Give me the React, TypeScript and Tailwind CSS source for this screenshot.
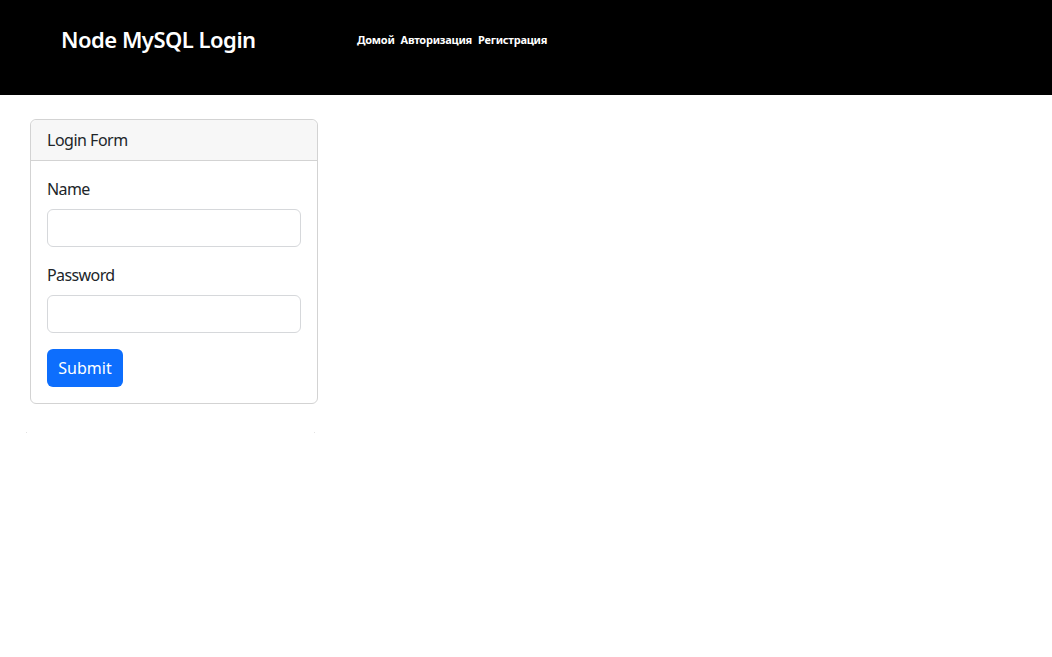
const App = () => {
  const font = { fontFamily: '"Noto Sans", "Open Sans", sans-serif' };

  return (
    <div className="min-h-[657px] bg-white text-[#212529]" style={font}>
      {/* шапка */}
      <header className="flex h-[95px] items-start bg-black pt-[23px] text-white">
        <h1 className="ml-[61px] w-[296px] text-[22px] leading-[32px] font-semibold tracking-[-0.5px]">
          Node MySQL Login
        </h1>
        <nav className="flex gap-[6px] pt-[9px] text-[11px] leading-[16px] font-bold tracking-[-0.25px]">
          <a href="#">Домой</a>
          <a href="#">Авторизация</a>
          <a href="#">Регистрация</a>
        </nav>
      </header>

      <div className="ml-[30px] mt-[24px] w-[288px] rounded-[6px] border border-[#d3d3d3]">
        <div className="rounded-t-[6px] border-b border-[#d3d3d3] bg-[#f7f7f7] px-4 py-2 text-[16px] leading-[24px] tracking-[-0.5px]">
          Login Form
        </div>
        <form className="flex flex-col p-4">
          <label className="mb-2 text-[16px] leading-[24px] tracking-[-0.6px]">Name</label>
          <input type="text" className="mb-4 h-[38px] w-full rounded-[6px] border border-[#d6d8db] bg-white px-3" />
          <label className="mb-2 text-[16px] leading-[24px] tracking-[-0.6px]">Password</label>
          <input type="password" className="mb-4 h-[38px] w-full rounded-[6px] border border-[#d6d8db] bg-white px-3" />
          <div>
            <button type="button" className="h-[38px] w-[76px] rounded-[6px] bg-[#0d6efd] text-[16px] text-white">
              Submit
            </button>
          </div>
        </form>
      </div>

      <div className="ml-[26px] mt-[28px] flex w-[289px] justify-between">
        <span className="h-px w-px bg-[#e2e2e2]" />
        <span className="h-px w-px bg-[#e2e2e2]" />
      </div>
    </div>
  );
};

export default App;
